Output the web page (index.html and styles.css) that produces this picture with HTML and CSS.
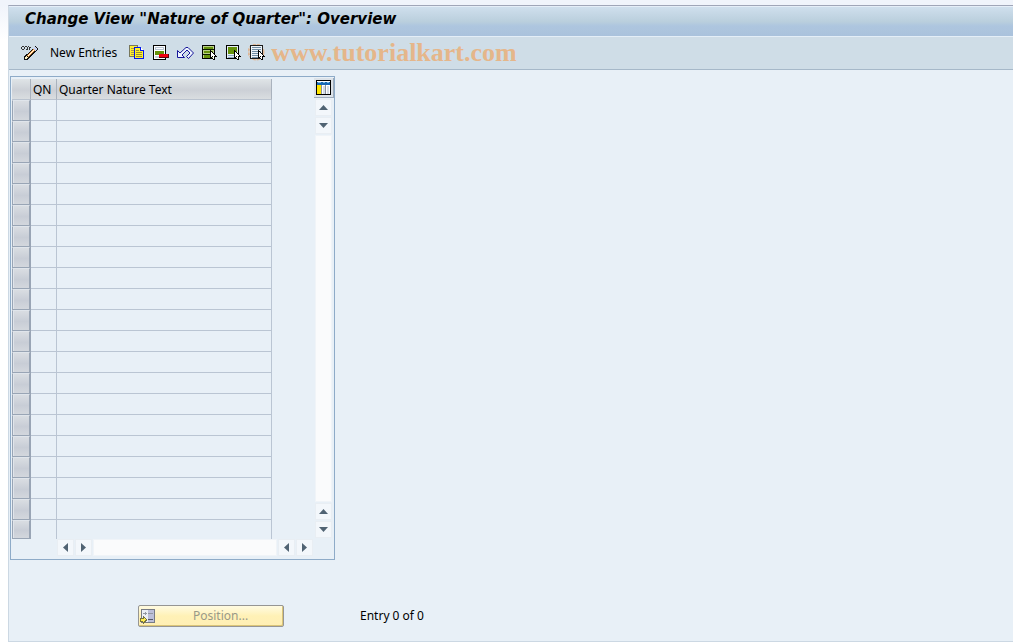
FILE: index.html
```html
<!DOCTYPE html>
<html lang="en">
<head>
<meta charset="utf-8">
<meta name="viewport" content="width=device-width, initial-scale=1">
<title>Change View "Nature of Quarter": Overview</title>
<link rel="stylesheet" href="styles.css">
</head>
<body>
<main class="window">
  <header class="titlebar"><h1 class="title">Change View "Nature of Quarter": Overview</h1></header>
  <div class="toolbar" role="toolbar" aria-label="Application toolbar">
    <button class="tool tool-edit" type="button" aria-label="Display/Change">
      <svg width="17" height="16" viewBox="0 0 17 16" shape-rendering="crispEdges"><path d="M0 2h1v2H0zM1 1h2v1H1zM3 2h1v2H3zM1 4h2v1H1zM4 1h2v1H4zM6 2h1v3H6zM5 4h1v1H5zM7 1h1v1H7zM8 2h1v3H8zM9 2h1v1H9z" fill="#333"/><path d="M13 1h2v1h1v1h1v2h-1v1h-1v1h-1v1h-1v1h-1v1h-1v1h-1v1h-1v1H8v1H7v1H3v-4h1v-1h1v-1h1V9h1V8h1V7h1V6h1V5h1V4h1V3h1V2h1z" fill="#111"/><path d="M13 2h2v1h1v2h-1v1h-1V5h-1V4h-1V3h1z" fill="#c6d0ee"/><path d="M12 4h1v1h1v1h-1v1h-1v1h-1v1h-1v1H9v1H8v1H7v-1H6v-1h1V9h1V8h1V7h1V6h1V5h1z" fill="#f59b35"/><path d="M7 10h1V9h1V8h1V7h1V6h1V5h1v1h-1v1h-1v1h-1v1H9v1H8v1H7z" fill="#fff"/><path d="M5 11h1v1h1v1H6v1H4v-2h1z" fill="#fff2c0"/></svg>
    </button>
    <button class="tool tool-text" type="button">New Entries</button>
    <button class="tool" type="button" aria-label="Copy As">
      <svg width="16" height="16" viewBox="0 0 16 16" shape-rendering="crispEdges"><path d="M.5.500h8v11h-8z" fill="#ffed31" stroke="#77775c"/><path d="M2 3.500h5M2 5.500h5M2 7.500h5M2 9.500h5" stroke="#a89c45"/><path d="M5.500 2.500h6l3 3v8h-9z" fill="#fff02b" stroke="#0015ed"/><path d="M11.500 2v3.500H15" fill="#fff" stroke="#0015ed"/><path d="M7 5.500h3M7 7.500h6M7 9.500h6M7 11.500h6" stroke="#968d34"/></svg>
    </button>
    <button class="tool" type="button" aria-label="Delete">
      <svg width="16" height="16" viewBox="0 0 16 16" shape-rendering="crispEdges"><path d="M.5.500h12v14H.5z" fill="#fff" stroke="#000"/><path d="M2 2h9v3H2z" fill="#b8c5d4"/><path d="M3 3.500h7" stroke="#fff"/><path d="M2 6h9v4H2z" fill="#65920c"/><path d="M2 11h5v2H2z" fill="#c8d2df"/><path d="M6 9h10v4H6z" fill="#60000a"/><path d="M6 9h9v3H6z" fill="#f00010"/></svg>
    </button>
    <button class="tool" type="button" aria-label="Undo Change">
      <svg width="17" height="16" viewBox="0 0 17 16"><path d="M.5 5.500v7h7L5 10l5-5 3 3-3.500 3.500 2 2L16.500 8 11 2.500H9L3 8z" fill="#eef4ff" stroke="#16169a"/></svg>
    </button>
    <button class="tool" type="button" aria-label="Select All">
      <svg width="16" height="16" viewBox="0 0 16 16" shape-rendering="crispEdges"><path d="M.5.500h12v13H.5z" fill="#b9cf88" stroke="#000"/><path d="M2 2h9v2H2zM2 6h9v2H2zM2 10h8v3H2z" fill="#65920c"/><path d="M1 4.500h11M1 9.500h11" stroke="#0c1c00"/><path d="M8 5h1v1h1v1h1v1h1v1h1v1h1v1h1v1h-2v3h-2v-3h-1v1H8z" fill="#000"/><path d="M9 7h1v1h1v1h1v1h1v1h-1v3h-1v-3h-1v1H9z" fill="#fff"/></svg>
    </button>
    <button class="tool" type="button" aria-label="Select Block">
      <svg width="16" height="16" viewBox="0 0 16 16" shape-rendering="crispEdges"><path d="M.5.500h12v13H.5z" fill="#e5edf5" stroke="#000"/><path d="M2 2h9v7H2z" fill="#65920c"/><path d="M2 10.500h6M2 12.500h6" stroke="#8eabc4"/><path d="M8 5h1v1h1v1h1v1h1v1h1v1h1v1h1v1h-2v3h-2v-3h-1v1H8z" fill="#000"/><path d="M9 7h1v1h1v1h1v1h1v1h-1v3h-1v-3h-1v1H9z" fill="#fff"/></svg>
    </button>
    <button class="tool" type="button" aria-label="Deselect All">
      <svg class="mark-icon" width="18" height="18" viewBox="-2 -1 18 18" shape-rendering="crispEdges"><circle cx="6" cy="7" r="7.500" fill="none" stroke="#dfb796" stroke-width="2" stroke-dasharray="3 1" shape-rendering="auto"/><path d="M.5.500h12v13H.5z" fill="#eef4f9" stroke="#1c1c1c"/><path d="M2 2.500h9M2 4.500h9M2 6.500h9M2 8.500h7M2 10.500h6M2 12.500h6" stroke="#718da4"/><path d="M8 5h1v1h1v1h1v1h1v1h1v1h1v1h1v1h-2v3h-2v-3h-1v1H8z" fill="#000"/><path d="M9 7h1v1h1v1h1v1h1v1h-1v3h-1v-3h-1v1H9z" fill="#fff"/></svg>
    </button>
    <span class="watermark">www.tutorialkart.com</span>
  </div>
  <div class="content">
    <section class="panel" aria-label="Nature of Quarter">
      <table class="grid">
        <thead><tr><th class="select-col" aria-label="Select"></th><th class="qn-col">QN</th><th class="text-col">Quarter Nature Text</th></tr></thead>
        <tbody>
          <tr><td><button class="row-select" type="button" aria-label="Select row 1"></button></td><td></td><td></td></tr>
          <tr><td><button class="row-select" type="button" aria-label="Select row 2"></button></td><td></td><td></td></tr>
          <tr><td><button class="row-select" type="button" aria-label="Select row 3"></button></td><td></td><td></td></tr>
          <tr><td><button class="row-select" type="button" aria-label="Select row 4"></button></td><td></td><td></td></tr>
          <tr><td><button class="row-select" type="button" aria-label="Select row 5"></button></td><td></td><td></td></tr>
          <tr><td><button class="row-select" type="button" aria-label="Select row 6"></button></td><td></td><td></td></tr>
          <tr><td><button class="row-select" type="button" aria-label="Select row 7"></button></td><td></td><td></td></tr>
          <tr><td><button class="row-select" type="button" aria-label="Select row 8"></button></td><td></td><td></td></tr>
          <tr><td><button class="row-select" type="button" aria-label="Select row 9"></button></td><td></td><td></td></tr>
          <tr><td><button class="row-select" type="button" aria-label="Select row 10"></button></td><td></td><td></td></tr>
          <tr><td><button class="row-select" type="button" aria-label="Select row 11"></button></td><td></td><td></td></tr>
          <tr><td><button class="row-select" type="button" aria-label="Select row 12"></button></td><td></td><td></td></tr>
          <tr><td><button class="row-select" type="button" aria-label="Select row 13"></button></td><td></td><td></td></tr>
          <tr><td><button class="row-select" type="button" aria-label="Select row 14"></button></td><td></td><td></td></tr>
          <tr><td><button class="row-select" type="button" aria-label="Select row 15"></button></td><td></td><td></td></tr>
          <tr><td><button class="row-select" type="button" aria-label="Select row 16"></button></td><td></td><td></td></tr>
          <tr><td><button class="row-select" type="button" aria-label="Select row 17"></button></td><td></td><td></td></tr>
          <tr><td><button class="row-select" type="button" aria-label="Select row 18"></button></td><td></td><td></td></tr>
          <tr><td><button class="row-select" type="button" aria-label="Select row 19"></button></td><td></td><td></td></tr>
          <tr><td><button class="row-select" type="button" aria-label="Select row 20"></button></td><td></td><td></td></tr>
          <tr><td><button class="row-select" type="button" aria-label="Select row 21"></button></td><td></td><td></td></tr>
        </tbody>
      </table>
      <div class="side">
        <button class="configure" type="button" aria-label="Table settings">
          <svg width="15" height="15" viewBox="0 0 15 15" shape-rendering="crispEdges"><path d="M0 0h15v15H0z" fill="#000"/><path d="M1 1h13v13H1z" fill="#fff"/><path d="M1 2h13v3H1z" fill="#1768b3"/><path d="M2 2h3v1H2zM7 2h2v1H7zM11 2h2v1h-2z" fill="#79b7e5"/><path d="M1 5h4v9H1z" fill="#ffe500"/><path d="M7 6h2v8H7zM11 6h2v8h-2z" fill="#d5dce5"/><path d="M5.500 5v9M9.500 5v9" stroke="#8a929b"/></svg>
        </button>
        <div class="vscroll">
          <button class="arrow" type="button" aria-label="First row"><svg width="9" height="5" viewBox="0 0 9 5"><path d="M0 5 4.500 0 9 5z"/></svg></button>
          <button class="arrow" type="button" aria-label="Scroll up"><svg width="9" height="5" viewBox="0 0 9 5"><path d="M0 0h9L4.500 5z"/></svg></button>
          <div class="track"></div>
          <button class="arrow" type="button" aria-label="Scroll down"><svg width="9" height="5" viewBox="0 0 9 5"><path d="M0 5 4.500 0 9 5z"/></svg></button>
          <button class="arrow" type="button" aria-label="Last row"><svg width="9" height="5" viewBox="0 0 9 5"><path d="M0 0h9L4.500 5z"/></svg></button>
        </div>
      </div>
      <div class="hscroll">
        <button class="arrow" type="button" aria-label="First column"><svg width="5" height="9" viewBox="0 0 5 9"><path d="M5 0v9L0 4.500z"/></svg></button>
        <button class="arrow" type="button" aria-label="Scroll left"><svg width="5" height="9" viewBox="0 0 5 9"><path d="M0 0v9l5-4.500z"/></svg></button>
        <div class="track"></div>
        <button class="arrow" type="button" aria-label="Scroll right"><svg width="5" height="9" viewBox="0 0 5 9"><path d="M5 0v9L0 4.500z"/></svg></button>
        <button class="arrow" type="button" aria-label="Last column"><svg width="5" height="9" viewBox="0 0 5 9"><path d="M0 0v9l5-4.500z"/></svg></button>
      </div>
    </section>
    <footer class="footer">
      <button class="position" type="button" disabled>
        <svg width="16" height="16" viewBox="0 0 16 16" shape-rendering="crispEdges"><path d="M1.500 1.500h13v13h-13z" fill="#eceff5" stroke="#777b85"/><path d="M8 2h6v12H8z" fill="#bcbfd9"/><path d="M3 5.500h4M5.500 4v3M8 5.500h5" stroke="#9297a1"/><path d="M8 11.500h5" stroke="#565967"/><path d="M0 10h3V8h1v1h1v1h1v1h1v2H6v1H5v1H4v1H3v-2H0z" fill="#77733f"/><path d="M1 11h3v-1h1v1h1v1H5v1H4v1H3v-1H1z" fill="#ffed50"/></svg>
        <span class="position-label">Position...</span>
      </button>
      <span class="entry">Entry 0 of 0</span>
    </footer>
  </div>
</main>
</body>
</html>
```
FILE: styles.css
```css
* { box-sizing: border-box; }

body {
  margin: 0;
  min-height: 100vh;
  display: flex;
  padding: 5px 0 0 8px;
  background: linear-gradient(#f0f4fb 5px, #fff 40px);
  color: #000;
  font: 12px/16px "Noto Sans", "DejaVu Sans", sans-serif;
}

button { margin: 0; padding: 0; border: 0; background: none; color: inherit; font: inherit; }
svg { display: block; flex: none; }

.window {
  flex: 1;
  min-width: 0;
  border: 1px solid #ccd8e3;
  border-top-color: #a0a6b8;
  border-right: 0;
  background: #e8f0f7;
}

.titlebar {
  height: 31px;
  padding: 2px 16px;
  border-top: 1px solid #e5eef8;
  border-bottom: 1px solid #e4eef7;
  background: linear-gradient(#cfdfed, #bacfdd 50%, #aec6df 65%, #aac2dc);
}

.title {
  margin: 0;
  font: italic bold 15px/20px "DejaVu Sans", Verdana, sans-serif;
}

.toolbar {
  display: flex;
  align-items: center;
  gap: 8px;
  height: 33px;
  padding: 0 12px;
  border-bottom: 1px solid #a6b8c9;
  background: #cfdde7;
}

.tool-text { margin: 0 4px; white-space: nowrap; }
.mark-icon { margin-left: -2px; }

.watermark {
  margin-left: -3px;
  color: #e5b68a;
  font: bold 26px/30px "Liberation Serif", serif;
}

.content { padding: 6px 1px 14px; }

.panel {
  display: grid;
  grid-template-columns: 260px 19px;
  justify-content: space-between;
  width: 325px;
  padding: 1px;
  border: 1px solid #8eabc8;
}

.grid {
  align-self: start;
  width: 260px;
  margin-top: 1px;
  border-collapse: separate;
  border-spacing: 0;
  table-layout: fixed;
}

.grid th {
  height: 21px;
  padding: 2px 2px 0;
  border-right: 1px solid #a9b2bd;
  border-bottom: 1px solid #bac3cf;
  background: linear-gradient(#dfe4e7, #ccd0d6 55%, #d9dde0);
  font-weight: normal;
  text-align: left;
  white-space: nowrap;
}

.grid .select-col { width: 19px; }
.grid .qn-col { width: 26px; }

.grid td {
  height: 21px;
  padding: 0;
  border-right: 1px solid #bac5d3;
  border-bottom: 1px solid #bac5d3;
}

.grid td:first-child { border-color: #99a5b5; }
.grid tr:last-child td { height: 19px; border-bottom: 0; }

.row-select {
  display: block;
  width: 18px;
  height: 20px;
  border: 1px solid #99a5b5;
  border-top-color: #e0e5eb;
  border-bottom: 0;
  background: linear-gradient(#d9dde2, #c8cdd6 55%, #d3d7dd);
  box-shadow: inset 1px 0 #e0e5eb;
}

.grid tr:last-child .row-select { height: 19px; border-bottom: 1px solid #99a5b5; }

.side { display: flex; flex-direction: column; align-items: center; }

.configure {
  padding: 2px;
  border-right: 1px solid #9eacbb;
  border-bottom: 1px solid #9eacbb;
  background: #dce2e8;
}

.vscroll { display: flex; flex: 1; flex-direction: column; gap: 1px; padding: 1px 0; }

.hscroll {
  display: flex;
  gap: 1px;
  grid-column: 1 / -1;
  margin: 0 20px 2px 45px;
}

.arrow {
  display: grid;
  flex: none;
  place-items: center;
  width: 17px;
  height: 17px;
  border: 1px solid #e9eef3;
  background: #f3f7fb;
  fill: #506373;
}

.track { flex: 1; border: 1px solid #f0f4f8; background: #fafbfc; }

.footer { display: flex; align-items: center; gap: 76px; padding: 45px 128px 0; }

.position {
  display: flex;
  align-items: center;
  width: 146px;
  height: 22px;
  padding: 0 1px;
  border: 1px solid #969694;
  border-radius: 2px;
  background: linear-gradient(#fffbe2, #fff1b6 50%, #ffefb5);
  box-shadow: inset -1px -1px #dbc578;
  color: #999988;
}

.position-label { margin-left: 37px; }
.entry { white-space: nowrap; }
```
